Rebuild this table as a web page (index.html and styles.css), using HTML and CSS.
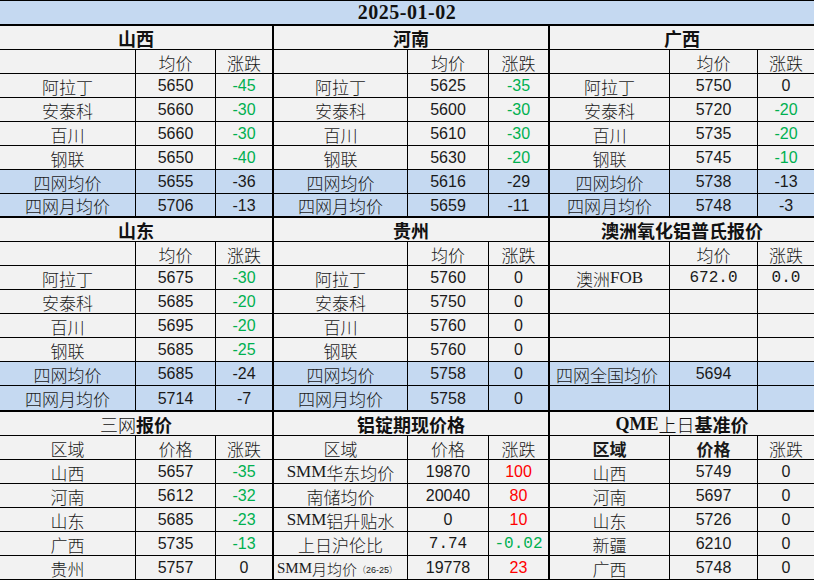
FILE: index.html
```html
<!DOCTYPE html>
<html lang="zh-CN">
<head>
<meta charset="utf-8">
<title>2025-01-02</title>
<link rel="stylesheet" href="styles.css">
</head>
<body>
<div class="sheet">
  <div class="date">2025-01-02</div>

  <div class="band band1">
    <div class="sec s1">
      <div class="c t">山西</div>
      <div class="c"></div><div class="c">均价</div><div class="c">涨跌</div>
      <div class="c">阿拉丁</div><div class="c n">5650</div><div class="c n g">-45</div>
      <div class="c">安泰科</div><div class="c n">5660</div><div class="c n g">-30</div>
      <div class="c">百川</div><div class="c n">5660</div><div class="c n g">-30</div>
      <div class="c">钢联</div><div class="c n">5650</div><div class="c n g">-40</div>
      <div class="c b">四网均价</div><div class="c b n">5655</div><div class="c b n">-36</div>
      <div class="c b">四网月均价</div><div class="c b n">5706</div><div class="c b n">-13</div>
    </div>
    <div class="sec s2">
      <div class="c t">河南</div>
      <div class="c"></div><div class="c">均价</div><div class="c">涨跌</div>
      <div class="c">阿拉丁</div><div class="c n">5625</div><div class="c n g">-35</div>
      <div class="c">安泰科</div><div class="c n">5600</div><div class="c n g">-30</div>
      <div class="c">百川</div><div class="c n">5610</div><div class="c n g">-30</div>
      <div class="c">钢联</div><div class="c n">5630</div><div class="c n g">-20</div>
      <div class="c b">四网均价</div><div class="c b n">5616</div><div class="c b n">-29</div>
      <div class="c b">四网月均价</div><div class="c b n">5659</div><div class="c b n">-11</div>
    </div>
    <div class="sec s3">
      <div class="c t">广西</div>
      <div class="c"></div><div class="c">均价</div><div class="c">涨跌</div>
      <div class="c">阿拉丁</div><div class="c n">5750</div><div class="c n">0</div>
      <div class="c">安泰科</div><div class="c n">5720</div><div class="c n g">-20</div>
      <div class="c">百川</div><div class="c n">5735</div><div class="c n g">-20</div>
      <div class="c">钢联</div><div class="c n">5745</div><div class="c n g">-10</div>
      <div class="c b">四网均价</div><div class="c b n">5738</div><div class="c b n">-13</div>
      <div class="c b">四网月均价</div><div class="c b n">5748</div><div class="c b n">-3</div>
    </div>
  </div>

  <div class="band band2">
    <div class="sec s1">
      <div class="c t">山东</div>
      <div class="c"></div><div class="c">均价</div><div class="c">涨跌</div>
      <div class="c">阿拉丁</div><div class="c n">5675</div><div class="c n g">-30</div>
      <div class="c">安泰科</div><div class="c n">5685</div><div class="c n g">-20</div>
      <div class="c">百川</div><div class="c n">5695</div><div class="c n g">-20</div>
      <div class="c">钢联</div><div class="c n">5685</div><div class="c n g">-25</div>
      <div class="c b">四网均价</div><div class="c b n">5685</div><div class="c b n">-24</div>
      <div class="c b">四网月均价</div><div class="c b n">5714</div><div class="c b n">-7</div>
    </div>
    <div class="sec s2">
      <div class="c t">贵州</div>
      <div class="c"></div><div class="c">均价</div><div class="c">涨跌</div>
      <div class="c">阿拉丁</div><div class="c n">5760</div><div class="c n">0</div>
      <div class="c">安泰科</div><div class="c n">5750</div><div class="c n">0</div>
      <div class="c">百川</div><div class="c n">5760</div><div class="c n">0</div>
      <div class="c">钢联</div><div class="c n">5760</div><div class="c n">0</div>
      <div class="c b">四网均价</div><div class="c b n">5758</div><div class="c b n">0</div>
      <div class="c b">四网月均价</div><div class="c b n">5758</div><div class="c b n">0</div>
    </div>
    <div class="sec s3">
      <div class="c t">澳洲氧化铝普氏报价</div>
      <div class="c"></div><div class="c">均价</div><div class="c">涨跌</div>
      <div class="c">澳洲<span class="ser">FOB</span></div><div class="c mono">672.0</div><div class="c mono">0.0</div>
      <div class="c"></div><div class="c"></div><div class="c"></div>
      <div class="c"></div><div class="c"></div><div class="c"></div>
      <div class="c"></div><div class="c"></div><div class="c"></div>
      <div class="c b left">四网全国均价</div><div class="c b n">5694</div><div class="c b"></div>
      <div class="c b"></div><div class="c b"></div><div class="c b"></div>
    </div>
  </div>

  <div class="band band3">
    <div class="sec s1">
      <div class="c t"><span class="nb">三网</span>报价</div>
      <div class="c">区域</div><div class="c">价格</div><div class="c">涨跌</div>
      <div class="c">山西</div><div class="c n">5657</div><div class="c n g">-35</div>
      <div class="c">河南</div><div class="c n">5612</div><div class="c n g">-32</div>
      <div class="c">山东</div><div class="c n">5685</div><div class="c n g">-23</div>
      <div class="c">广西</div><div class="c n">5735</div><div class="c n g">-13</div>
      <div class="c">贵州</div><div class="c n">5757</div><div class="c n">0</div>
      <div class="c"></div><div class="c"></div><div class="c"></div>
    </div>
    <div class="sec s2">
      <div class="c t">铝锭期现价格</div>
      <div class="c">区域</div><div class="c">价格</div><div class="c">涨跌</div>
      <div class="c"><span class="ser">SMM</span>华东均价</div><div class="c n">19870</div><div class="c n r">100</div>
      <div class="c">南储均价</div><div class="c n">20040</div><div class="c n r">80</div>
      <div class="c"><span class="ser">SMM</span>铝升贴水</div><div class="c n">0</div><div class="c n r">10</div>
      <div class="c">上日沪伦比</div><div class="c mono">7.74</div><div class="c mono g">-0.02</div>
      <div class="c tight"><span class="ser">SMM</span>月均价<span class="small">（26-25）</span></div><div class="c n">19778</div><div class="c n r">23</div>
      <div class="c"></div><div class="c"></div><div class="c"></div>
    </div>
    <div class="sec s3">
      <div class="c t"><span class="ser">QME</span><span class="nb">上日</span>基准价</div>
      <div class="c bold">区域</div><div class="c bold">价格</div><div class="c">涨跌</div>
      <div class="c">山西</div><div class="c n">5749</div><div class="c n">0</div>
      <div class="c">河南</div><div class="c n">5697</div><div class="c n">0</div>
      <div class="c">山东</div><div class="c n">5726</div><div class="c n">0</div>
      <div class="c">新疆</div><div class="c n">6210</div><div class="c n">0</div>
      <div class="c">广西</div><div class="c n">5748</div><div class="c n">0</div>
      <div class="c"></div><div class="c"></div><div class="c"></div>
    </div>
  </div>
</div>
</body>
</html>
```

FILE: styles.css
```css
html, body {
  margin: 0;
  padding: 0;
  background: #f2f2f2;
}
body {
  width: 814px;
  height: 580px;
  overflow: hidden;
}
.sheet {
  width: 814px;
  background: #000;
  padding-top: 1px;
  display: flex;
  flex-direction: column;
  gap: 2px;
}
.date {
  height: 23px;
  background: #c5d9f1;
  display: flex;
  align-items: center;
  justify-content: center;
  font-family: "Liberation Serif", "Noto Sans CJK SC", serif;
  font-weight: bold;
  font-size: 20px;
  letter-spacing: 0.5px;
  color: #111;
}
.band {
  display: grid;
  grid-template-columns: 272px 274px 264px;
  column-gap: 2px;
}
.band1 .sec { grid-template-rows: repeat(7, 23px) 22px; }
.band2 .sec { grid-template-rows: repeat(7, 23px) 24px; }
.band3 .sec { grid-template-rows: repeat(8, 23px); }
.sec {
  display: grid;
  gap: 1px;
  background: #000;
}
.s1 { grid-template-columns: 135px 79px 56px; }
.s2 { grid-template-columns: 133px 80px 59px; }
.s3 { grid-template-columns: 119px 87px 56px; }
.c {
  background: #f2f2f2;
  display: flex;
  align-items: center;
  justify-content: center;
  padding-top: 1px;
  font-family: "Liberation Sans", "Noto Sans CJK SC", sans-serif;
  font-size: 17px;
  font-weight: 300;
  color: #1a1a1a;
  white-space: nowrap;
  overflow: hidden;
}
.c.n {
  font-size: 16px;
  font-weight: normal;
}
.c.t {
  grid-column: 1 / -1;
  font-family: "Liberation Serif", "Noto Sans CJK SC", serif;
  font-weight: bold;
  font-size: 18px;
  color: #111;
}
.nb { font-weight: 300; }
.bold { font-weight: bold; }
.c.b { background: #c5d9f1; }
.c.left {
  justify-content: flex-start;
  padding-left: 6px;
}
.c.tight {
  font-size: 15px;
  justify-content: flex-start;
  padding-left: 3px;
}
.g { color: #00b050; }
.r { color: #ff0000; }
.ser {
  font-family: "Liberation Serif", serif;
}
.c.mono {
  font-family: "Liberation Mono", monospace;
  font-size: 16px;
  font-weight: normal;
}
.small {
  font-size: 9px;
  padding-top: 2px;
}
```
